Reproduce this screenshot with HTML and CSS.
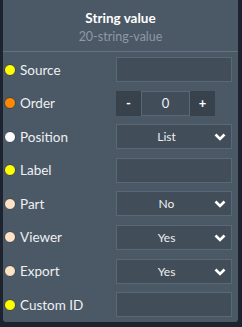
FILE: index.html
```html
<!DOCTYPE html>
<html>
<head>
<meta charset="utf-8">
<link rel="stylesheet" href="styles.css">
</head>
<body>
<div class="panel">
  <div class="header">
    <div class="title">String value</div>
    <div class="subtitle">20-string-value</div>
  </div>
  <div class="rows">
    <div class="row"><span class="dot yellow"></span><span class="label">Source</span><div class="input"></div></div>
    <div class="row"><span class="dot orange"></span><span class="label">Order</span>
      <div class="stepper"><div class="btn">-</div><div class="num">0</div><div class="btn">+</div></div></div>
    <div class="row"><span class="dot white"></span><span class="label">Position</span>
      <div class="select"><span class="val">List</span><svg class="chev" width="12" height="8" viewBox="0 0 12 8"><polyline points="1.5,1.5 6,6 10.5,1.5" fill="none" stroke="#fff" stroke-width="2.6"/></svg></div></div>
    <div class="row"><span class="dot yellow"></span><span class="label">Label</span><div class="input"></div></div>
    <div class="row"><span class="dot peach"></span><span class="label">Part</span>
      <div class="select"><span class="val">No</span><svg class="chev" width="12" height="8" viewBox="0 0 12 8"><polyline points="1.5,1.5 6,6 10.5,1.5" fill="none" stroke="#fff" stroke-width="2.6"/></svg></div></div>
    <div class="row"><span class="dot peach"></span><span class="label">Viewer</span>
      <div class="select"><span class="val">Yes</span><svg class="chev" width="12" height="8" viewBox="0 0 12 8"><polyline points="1.5,1.5 6,6 10.5,1.5" fill="none" stroke="#fff" stroke-width="2.6"/></svg></div></div>
    <div class="row"><span class="dot peach"></span><span class="label">Export</span>
      <div class="select"><span class="val">Yes</span><svg class="chev" width="12" height="8" viewBox="0 0 12 8"><polyline points="1.5,1.5 6,6 10.5,1.5" fill="none" stroke="#fff" stroke-width="2.6"/></svg></div></div>
    <div class="row"><span class="dot yellow"></span><span class="label">Custom ID</span><div class="input"></div></div>
  </div>
</div>
</body>
</html>
```
FILE: styles.css
```css
html, body {
  margin: 0;
  padding: 0;
  background: #1d2430;
  width: 242px;
  height: 327px;
  overflow: hidden;
}
.panel {
  margin-left: 3px;
  width: 235px;
  height: 322px;
  background: #4b5866;
  border-radius: 0 0 3px 3px;
  box-sizing: border-box;
  font-family: "Lato", "DejaVu Sans", sans-serif;
  color: #eef0f2;
}
.header {
  height: 52px;
  box-sizing: border-box;
  border-bottom: 1px solid #66727f;
  text-align: center;
  padding-top: 10px;
}
.title {
  font-weight: bold;
  font-size: 13.5px;
  line-height: 17px;
  color: #ffffff;
}
.subtitle {
  font-size: 12.5px;
  line-height: 16px;
  color: #8d99a5;
  margin-top: 2px;
}
.rows {
  display: flex;
  flex-direction: column;
  gap: 8.6px;
  padding-top: 5px;
}
.row {
  display: flex;
  align-items: center;
  height: 25px;
}
.dot {
  width: 12px;
  height: 12px;
  border-radius: 50%;
  margin-left: 1px;
  flex: none;
  box-sizing: border-box;
  border: 1px solid #3a4450;
}
.yellow { background: #ffff00; }
.orange { background: #ff8a00; }
.white { background: #ffffff; }
.peach { background: #fde3c6; }
.label {
  margin-left: 4px;
  font-size: 13.5px;
  width: 96px;
  flex: none;
}
.input, .select {
  width: 116px;
  height: 25px;
  box-sizing: border-box;
  background: #414d59;
  border: 1px solid #5a6774;
}
.select {
  display: flex;
  align-items: center;
  position: relative;
}
.val {
  flex: 1;
  text-align: center;
  font-size: 12px;
  padding-right: 15px;
}
.chev {
  position: absolute;
  right: 5px;
  top: 8px;
}
.stepper {
  display: flex;
  height: 25px;
}
.btn {
  width: 25px;
  height: 25px;
  background: #38424d;
  display: flex;
  align-items: center;
  justify-content: center;
  font-size: 13px;
  font-weight: bold;
  color: #ffffff;
}
.num {
  width: 49px;
  height: 25px;
  box-sizing: border-box;
  background: #414d59;
  border: 1px solid #5a6774;
  display: flex;
  align-items: center;
  justify-content: center;
  font-size: 13px;
}
```
